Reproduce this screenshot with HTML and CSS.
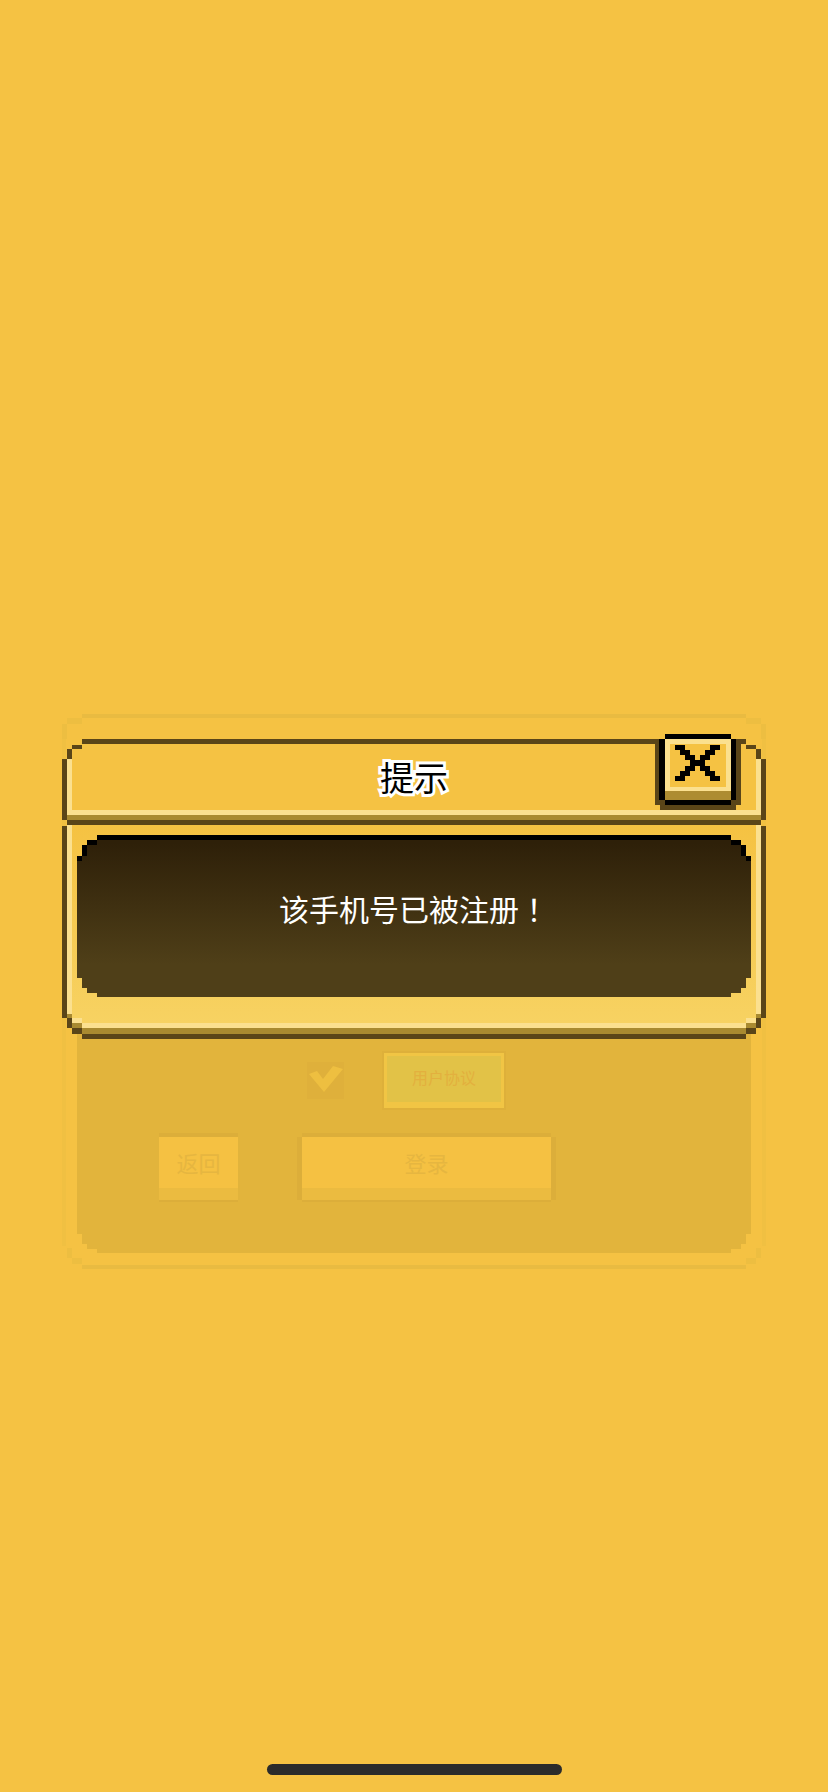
FILE: index.html
```html
<!DOCTYPE html>
<html lang="zh-CN">
<head>
<meta charset="utf-8">
<title>提示</title>
<link rel="stylesheet" href="styles.css">
</head>
<body>
<main class="page">
  <section class="back">
    <svg class="back-frame" width="704" height="555" viewBox="0 0 704 555" shape-rendering="crispEdges" aria-hidden="true">
      <defs>
        <g id="back-side">
          <g fill="#e9bb41">
            <rect x="20" y="0" width="332" height="4"/>
            <rect x="20" y="551" width="332" height="4"/>
          </g>
          <g fill="#edbe41">
            <rect x="5" y="4" width="15" height="6"/>
            <rect x="0" y="10" width="5" height="15"/>
            <rect x="5" y="534" width="5" height="10"/>
            <rect x="10" y="544" width="10" height="6"/>
          </g>
          <rect x="0" y="25" width="4" height="507" fill="#f0c042"/>
        </g>
      </defs>
      <use href="#back-side"/>
      <use href="#back-side" transform="translate(704) scale(-1,1)"/>
    </svg>
    <div class="back-panel">
      <div class="agree-row">
        <span class="check">
          <svg width="37" height="37" viewBox="0 0 37 37" aria-hidden="true"><polygon points="2,12 10,9 16,17 26,4 36,7 17,30" fill="#eebf40"/></svg>
        </span>
        <span class="agreement">用户协议</span>
      </div>
      <div class="action-row">
        <span class="btn btn-back">返回</span>
        <span class="btn btn-login">登录</span>
      </div>
    </div>
  </section>

  <section class="dialog">
    <svg class="dialog-frame" width="704" height="300" viewBox="0 0 704 300" shape-rendering="crispEdges" aria-hidden="true">
      <defs>
        <g id="frame-side">
          <g fill="#fbe08f">
            <rect x="5" y="20" width="5" height="51"/>
            <rect x="5" y="86" width="5" height="189"/>
            <rect x="5" y="71" width="347" height="5"/>
            <rect x="10" y="279" width="10" height="5"/>
            <rect x="20" y="284" width="332" height="5"/>
          </g>
          <g fill="#a98a30">
            <rect x="5" y="76" width="347" height="5"/>
            <rect x="5" y="275" width="5" height="4"/>
            <rect x="10" y="284" width="10" height="5"/>
            <rect x="20" y="289" width="332" height="6"/>
          </g>
          <g fill="#5a4518">
            <rect x="20" y="0" width="332" height="5"/>
            <rect x="10" y="6" width="10" height="4"/>
            <rect x="5" y="10" width="5" height="10"/>
            <rect x="0" y="20" width="5" height="61"/>
            <rect x="5" y="81" width="347" height="5"/>
            <rect x="0" y="87" width="5" height="192"/>
            <rect x="5" y="279" width="5" height="10"/>
            <rect x="10" y="289" width="10" height="6"/>
            <rect x="20" y="295" width="332" height="5"/>
          </g>
        </g>
      </defs>
      <use href="#frame-side"/>
      <use href="#frame-side" transform="translate(704) scale(-1,1)"/>
    </svg>
    <header class="dialog-head">
      <h1 class="dialog-title">提示</h1>
    </header>
    <div class="dialog-body">
      <div class="message-panel">
        <p class="message">该手机号已被注册<span class="bang" lang="zh-TW">！</span></p>
      </div>
    </div>
    <span class="close">
      <svg width="86" height="76" viewBox="0 0 86 76" shape-rendering="crispEdges" aria-hidden="true">
        <g fill="#5a4518"><rect x="0" y="5" width="86" height="66"/><rect x="5" y="71" width="76" height="5"/></g>
        <g fill="#000"><rect x="10" y="0" width="66" height="5"/><rect x="4" y="5" width="6" height="61"/><rect x="76" y="5" width="5" height="61"/><rect x="10" y="66" width="66" height="5"/></g>
        <rect x="10" y="5" width="66" height="52" fill="#fbe08f"/>
        <rect x="10" y="57" width="66" height="9" fill="#ad8c31"/>
        <rect x="15" y="10" width="56" height="43" fill="#f5c243"/>
        <svg x="20" y="11" width="45" height="36" viewBox="0 0 9 7" preserveAspectRatio="none">
          <path d="M0 0h2v1h1v1h1v1h1v-1h1v-1h1v-1h2v1h-1v1h-1v1h-1v1h1v1h1v1h1v1h-2v-1h-1v-1h-1v-1h-1v1h-1v1h-1v1h-2v-1h1v-1h1v-1h1v-1h-1v-1h-1v-1h-1z" fill="#000"/>
        </svg>
      </svg>
    </span>
  </section>

  <div class="home-indicator"></div>
</main>
</body>
</html>
```

FILE: styles.css
```css
* { box-sizing: border-box; }
html, body { margin: 0; padding: 0; }
body { background: #f5c243; font-family: "Noto Sans CJK SC", "Noto Sans", sans-serif; }

.page {
  position: relative;
  width: 828px;
  height: 1792px;
  overflow: hidden;
  padding-top: 714px;
  background: #f5c243;
}

.back {
  position: relative;
  width: 704px;
  height: 555px;
  margin-left: 62px;
  padding: 31px 15px 0;
}
.back-frame { position: absolute; left: 0; top: 0; }
.back-panel {
  position: relative;
  display: flex;
  flex-direction: column;
  height: 508px;
  padding-top: 308px;
  background: #e2b43c;
  clip-path: polygon(0 0, 674px 0, 674px 489px, 669px 489px, 669px 499px, 664px 499px, 664px 504px, 654px 504px, 654px 508px, 20px 508px, 20px 504px, 10px 504px, 10px 499px, 5px 499px, 5px 489px, 0 489px);
}

.agree-row {
  display: flex;
  align-items: center;
  padding-left: 230px;
  gap: 40px;
  height: 55px;
}
.check {
  display: block;
  width: 37px;
  height: 37px;
  background: #dfb03b;
}
.check svg { display: block; }
.agreement {
  display: flex;
  align-items: center;
  justify-content: center;
  width: 120px;
  height: 55px;
  padding-bottom: 4px;
  background: #e2c247;
  border: 3px solid #f1c544;
  border-bottom-width: 6px;
  box-shadow: 0 0 0 2px #deb03a;
  color: #e3b03e;
  font-size: 16px;
}

.action-row {
  display: flex;
  margin-top: 29px;
  padding-left: 82px;
  gap: 64px;
}
.btn {
  display: flex;
  align-items: center;
  justify-content: center;
  height: 63px;
  padding-bottom: 2px;
  background: #f5c142;
  border-bottom: 12px solid #ebbb40;
  box-shadow: 0 -4px 0 #dcae3a, 0 2px 0 #dcae3a;
  color: #e6b640;
  font-size: 22px;
}
.btn-back { width: 79px; }
.btn-login {
  width: 249px;
  box-shadow: 0 -4px 0 #dcae3a, 0 2px 0 #dcae3a, -5px 0 0 #dcae3a, 5px 0 0 #dcae3a;
}

.dialog {
  position: absolute;
  left: 62px;
  top: 739px;
  width: 704px;
  height: 300px;
}
.dialog-frame { position: absolute; left: 0; top: 0; z-index: 2; }
.dialog-head {
  display: flex;
  justify-content: center;
  height: 86px;
  padding-top: 13px;
  background: #f5c243;
  margin: 0 5px;
}
.dialog-title {
  margin: 0;
  font-size: 34px;
  font-weight: 400;
  line-height: 50px;
  color: #000;
  -webkit-text-stroke: 6px #fff;
  paint-order: stroke fill;
}
.dialog-body {
  height: 198px;
  margin: 0 5px;
  padding: 10px 10px 0;
  background: linear-gradient(#f5c242, #f7d262);
}
.message-panel {
  position: relative;
  display: flex;
  align-items: center;
  justify-content: center;
  height: 162px;
  padding-bottom: 16px;
  background: #000;
  clip-path: polygon(20px 0, 654px 0, 654px 5px, 664px 5px, 664px 10px, 669px 10px, 669px 21px, 674px 21px, 674px 143px, 669px 143px, 669px 153px, 664px 153px, 664px 158px, 654px 158px, 654px 162px, 20px 162px, 20px 158px, 10px 158px, 10px 153px, 5px 153px, 5px 143px, 0 143px, 0 21px, 5px 21px, 5px 10px, 10px 10px, 10px 5px, 20px 5px);
}
.message-panel::before {
  content: "";
  position: absolute;
  inset: 0;
  background: linear-gradient(#2e2009 5%, #4f3f18 80%);
  clip-path: polygon(20px 5px, 654px 5px, 654px 10px, 664px 10px, 664px 21px, 669px 21px, 669px 26px, 674px 26px, 674px 162px, 0 162px, 0 26px, 5px 26px, 5px 21px, 10px 21px, 10px 10px, 20px 10px);
}
.message {
  position: relative;
  margin: 0;
  font-size: 30px;
  line-height: 40px;
  color: #fff;
  text-spacing-trim: space-all;
}
.bang { font-family: "Noto Sans CJK TC", sans-serif; }

.close {
  position: absolute;
  left: 593px;
  top: -5px;
  z-index: 3;
  display: block;
  width: 86px;
  height: 76px;
}
.close > svg { display: block; }

.home-indicator {
  width: 295px;
  height: 11px;
  margin: 495px 0 0 267px;
  border-radius: 6px;
  background: #2b2b2b;
}
```
